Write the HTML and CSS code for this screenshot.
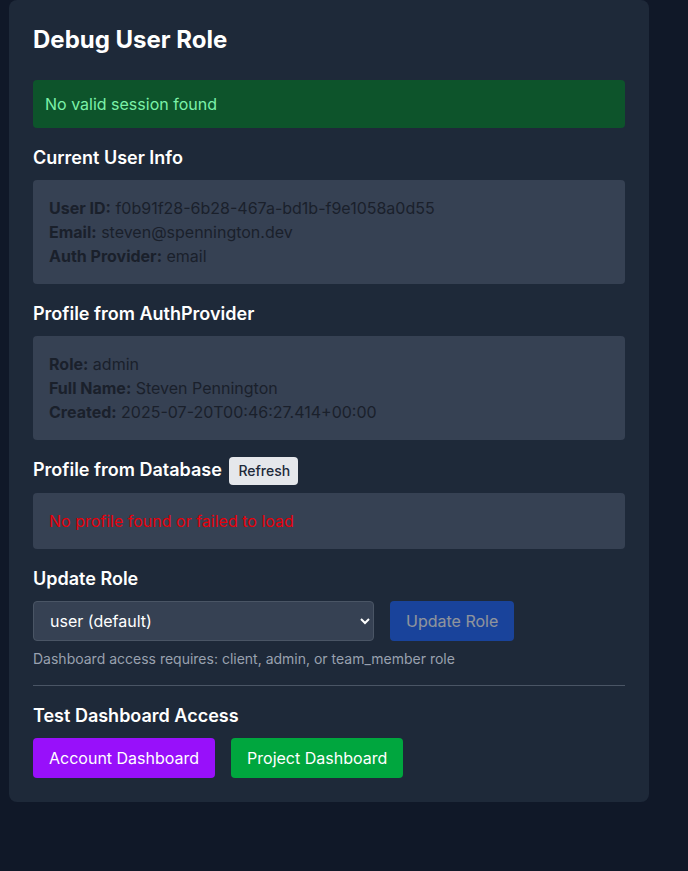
FILE: index.html
```html
<!DOCTYPE html>
<html lang="en">
<head>
<meta charset="utf-8">
<title>Debug User Role</title>
<link rel="stylesheet" href="styles.css">
</head>
<body>
<div class="card">
  <h1 class="title">Debug User Role</h1>
  <div class="alert">No valid session found</div>

  <section class="section">
    <h2 class="heading">Current User Info</h2>
    <div class="box">
      <p><strong>User ID:</strong> f0b91f28-6b28-467a-bd1b-f9e1058a0d55</p>
      <p><strong>Email:</strong> steven@spennington.dev</p>
      <p><strong>Auth Provider:</strong> email</p>
    </div>
  </section>

  <section class="section">
    <h2 class="heading">Profile from AuthProvider</h2>
    <div class="box">
      <p><strong>Role:</strong> admin</p>
      <p><strong>Full Name:</strong> Steven Pennington</p>
      <p><strong>Created:</strong> 2025-07-20T00:46:27.414+00:00</p>
    </div>
  </section>

  <section class="section">
    <h2 class="heading">Profile from Database <button class="refresh">Refresh</button></h2>
    <div class="box">
      <p class="error">No profile found or failed to load</p>
    </div>
  </section>

  <section class="section">
    <h2 class="heading">Update Role</h2>
    <div class="row">
      <select class="select">
        <option>user (default)</option>
        <option>client</option>
        <option>admin</option>
        <option>team_member</option>
      </select>
      <button class="update" disabled>Update Role</button>
    </div>
    <p class="help">Dashboard access requires: client, admin, or team_member role</p>
  </section>

  <div class="divider">
    <h2 class="heading">Test Dashboard Access</h2>
    <div class="actions">
      <button class="btn purple">Account Dashboard</button>
      <button class="btn green">Project Dashboard</button>
    </div>
  </div>
</div>
</body>
</html>
```

FILE: styles.css
```css
* { box-sizing: border-box; }
html, body {
  margin: 0;
  padding: 0;
  background: #101828;
  font-family: Inter, "Noto Sans", "Liberation Sans", sans-serif;
  color: #ffffff;
}
body { padding: 0 0 0 9px; }
.card {
  width: 640px;
  background: #1e2939;
  border-radius: 8px;
  padding: 24px;
}
.title {
  margin: 0 0 24px;
  font-size: 24px;
  line-height: 32px;
  font-weight: 700;
}
.alert {
  background: #0d542b;
  color: #7bf1a8;
  padding: 12px;
  border-radius: 4px;
  font-size: 16px;
  line-height: 24px;
  margin-bottom: 16px;
}
.section { margin-bottom: 16px; }
.heading {
  margin: 0 0 8px;
  font-size: 18px;
  line-height: 28px;
  font-weight: 600;
}
.refresh {
  display: inline-block;
  vertical-align: baseline;
  margin-left: 3px;
  background: #e5e7eb;
  color: #1e2939;
  border: none;
  border-radius: 4px;
  font-family: inherit;
  font-size: 14px;
  line-height: 20px;
  font-weight: 500;
  padding: 4px 8px 4px 9px;
}
.box {
  background: #364153;
  border-radius: 4px;
  padding: 16px;
  color: #1a202b;
  font-size: 16px;
  line-height: 24px;
}
.box p { margin: 0; }
.box strong { font-weight: 700; }
.error { color: #e7000b; }
.row {
  display: flex;
  gap: 16px;
}
.select {
  width: 341px;
  height: 40px;
  background: #364153;
  color: #ffffff;
  border: 1px solid #4a5565;
  border-radius: 4px;
  padding: 0 12px;
  font-family: inherit;
  font-size: 16px;
}
.update {
  height: 40px;
  padding: 0 16px;
  background: #155dfc;
  color: #ffffff;
  opacity: 0.5;
  border: none;
  border-radius: 4px;
  font-family: inherit;
  font-size: 16px;
  line-height: 24px;
}
.help {
  margin: 8px 0 0;
  font-size: 14px;
  line-height: 20px;
  color: #99a1af;
}
.divider {
  border-top: 1px solid #4a5565;
  padding-top: 16px;
}
.actions {
  display: flex;
  gap: 16px;
  margin-top: 8px;
}
.btn {
  border: none;
  border-radius: 4px;
  padding: 8px 16px;
  font-family: inherit;
  font-size: 16px;
  line-height: 24px;
  color: #ffffff;
}
.purple { background: #9810fa; }
.green { background: #00a63e; }
```
